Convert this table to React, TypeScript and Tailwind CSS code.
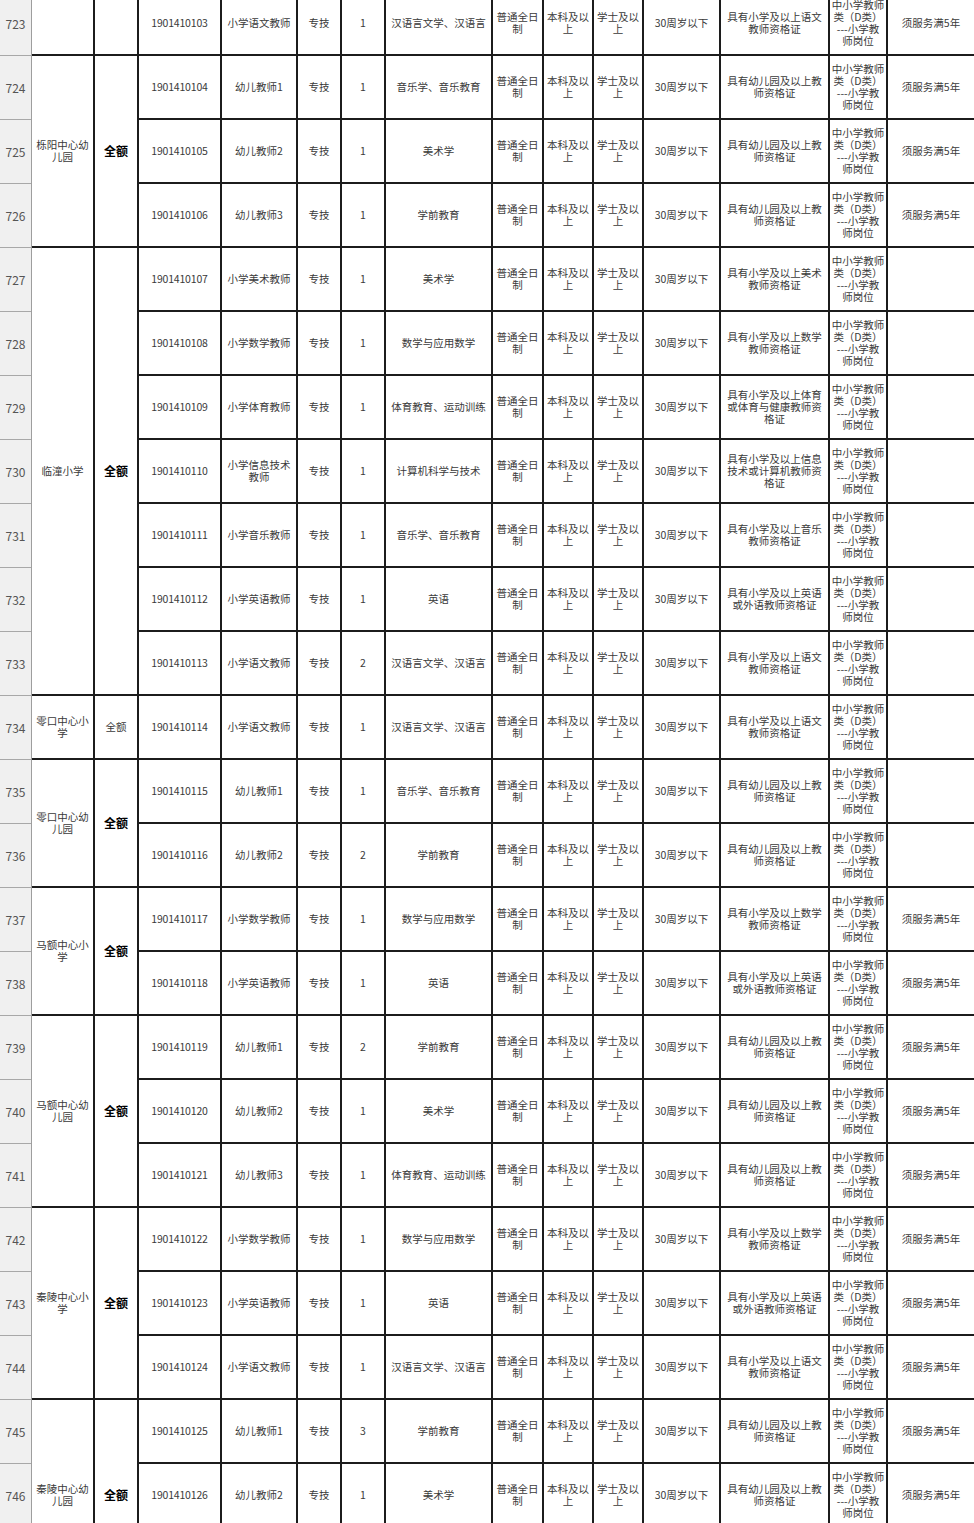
import React from "react";

type Row = {
  n: number;
  code: string;
  post: string;
  count: string;
  major: string;
  cert: string;
  note: string;
};

const rows: Row[] = [
  { n: 723, code: "1901410103", post: "小学语文教师", count: "1", major: "汉语言文学、汉语言", cert: "具有小学及以上语文教师资格证", note: "须服务满5年" },
  { n: 724, code: "1901410104", post: "幼儿教师1", count: "1", major: "音乐学、音乐教育", cert: "具有幼儿园及以上教师资格证", note: "须服务满5年" },
  { n: 725, code: "1901410105", post: "幼儿教师2", count: "1", major: "美术学", cert: "具有幼儿园及以上教师资格证", note: "须服务满5年" },
  { n: 726, code: "1901410106", post: "幼儿教师3", count: "1", major: "学前教育", cert: "具有幼儿园及以上教师资格证", note: "须服务满5年" },
  { n: 727, code: "1901410107", post: "小学美术教师", count: "1", major: "美术学", cert: "具有小学及以上美术教师资格证", note: "" },
  { n: 728, code: "1901410108", post: "小学数学教师", count: "1", major: "数学与应用数学", cert: "具有小学及以上数学教师资格证", note: "" },
  { n: 729, code: "1901410109", post: "小学体育教师", count: "1", major: "体育教育、运动训练", cert: "具有小学及以上体育或体育与健康教师资格证", note: "" },
  { n: 730, code: "1901410110", post: "小学信息技术教师", count: "1", major: "计算机科学与技术", cert: "具有小学及以上信息技术或计算机教师资格证", note: "" },
  { n: 731, code: "1901410111", post: "小学音乐教师", count: "1", major: "音乐学、音乐教育", cert: "具有小学及以上音乐教师资格证", note: "" },
  { n: 732, code: "1901410112", post: "小学英语教师", count: "1", major: "英语", cert: "具有小学及以上英语或外语教师资格证", note: "" },
  { n: 733, code: "1901410113", post: "小学语文教师", count: "2", major: "汉语言文学、汉语言", cert: "具有小学及以上语文教师资格证", note: "" },
  { n: 734, code: "1901410114", post: "小学语文教师", count: "1", major: "汉语言文学、汉语言", cert: "具有小学及以上语文教师资格证", note: "" },
  { n: 735, code: "1901410115", post: "幼儿教师1", count: "1", major: "音乐学、音乐教育", cert: "具有幼儿园及以上教师资格证", note: "" },
  { n: 736, code: "1901410116", post: "幼儿教师2", count: "2", major: "学前教育", cert: "具有幼儿园及以上教师资格证", note: "" },
  { n: 737, code: "1901410117", post: "小学数学教师", count: "1", major: "数学与应用数学", cert: "具有小学及以上数学教师资格证", note: "须服务满5年" },
  { n: 738, code: "1901410118", post: "小学英语教师", count: "1", major: "英语", cert: "具有小学及以上英语或外语教师资格证", note: "须服务满5年" },
  { n: 739, code: "1901410119", post: "幼儿教师1", count: "2", major: "学前教育", cert: "具有幼儿园及以上教师资格证", note: "须服务满5年" },
  { n: 740, code: "1901410120", post: "幼儿教师2", count: "1", major: "美术学", cert: "具有幼儿园及以上教师资格证", note: "须服务满5年" },
  { n: 741, code: "1901410121", post: "幼儿教师3", count: "1", major: "体育教育、运动训练", cert: "具有幼儿园及以上教师资格证", note: "须服务满5年" },
  { n: 742, code: "1901410122", post: "小学数学教师", count: "1", major: "数学与应用数学", cert: "具有小学及以上数学教师资格证", note: "须服务满5年" },
  { n: 743, code: "1901410123", post: "小学英语教师", count: "1", major: "英语", cert: "具有小学及以上英语或外语教师资格证", note: "须服务满5年" },
  { n: 744, code: "1901410124", post: "小学语文教师", count: "1", major: "汉语言文学、汉语言", cert: "具有小学及以上语文教师资格证", note: "须服务满5年" },
  { n: 745, code: "1901410125", post: "幼儿教师1", count: "3", major: "学前教育", cert: "具有幼儿园及以上教师资格证", note: "须服务满5年" },
  { n: 746, code: "1901410126", post: "幼儿教师2", count: "1", major: "美术学", cert: "具有幼儿园及以上教师资格证", note: "须服务满5年" },
  { n: 747, code: "1901410127", post: "幼儿教师3", count: "1", major: "体育教育、运动训练", cert: "具有幼儿园及以上教师资格证", note: "须服务满5年" },
];

type Group = { start: number; span: number; name: string; bold: boolean; fund: string };

const groups: Group[] = [
  { start: 0, span: 1, name: "", bold: false, fund: "" },
  { start: 1, span: 3, name: "栎阳中心幼儿园", bold: true, fund: "全额" },
  { start: 4, span: 7, name: "临潼小学", bold: true, fund: "全额" },
  { start: 11, span: 1, name: "零口中心小学", bold: false, fund: "全额" },
  { start: 12, span: 2, name: "零口中心幼儿园", bold: true, fund: "全额" },
  { start: 14, span: 2, name: "马额中心小学", bold: true, fund: "全额" },
  { start: 16, span: 3, name: "马额中心幼儿园", bold: true, fund: "全额" },
  { start: 19, span: 3, name: "秦陵中心小学", bold: true, fund: "全额" },
  { start: 22, span: 3, name: "秦陵中心幼儿园", bold: true, fund: "全额" },
];

const spanClass: Record<number, string> = {
  1: "row-span-1",
  2: "row-span-2",
  3: "row-span-3",
  7: "row-span-7",
};

const rowStartClass: string[] = [
  "row-start-1", "row-start-2", "row-start-3", "row-start-4", "row-start-5",
  "row-start-6", "row-start-7", "row-start-8", "row-start-9", "row-start-10",
  "row-start-11", "row-start-12", "row-start-13", "row-start-14", "row-start-15",
  "row-start-16", "row-start-17", "row-start-18", "row-start-19", "row-start-20",
  "row-start-21", "row-start-22", "row-start-23", "row-start-24", "row-start-25",
];

const cell = "bg-white flex items-center justify-center text-center text-[10.5px] leading-[12px] text-[#3a3a3a]";

export default function App() {
  return (
    <div
      className="h-[1523px] w-[974px] overflow-hidden bg-white"
      style={{ fontFamily: '"Noto Sans CJK SC", "Noto Sans", sans-serif' }}
    >
      <div className="flex -mt-[8px]">
        <div className="w-[32px] shrink-0 flex flex-col bg-[#f0f0f0] border-r border-[#9e9e9e]">
          {rows.map((r) => (
            <div
              key={r.n}
              className="h-[64px] shrink-0 border-b border-[#a8a8a8] flex items-center justify-center text-[12px] text-[#555] pt-[1px]"
            >
              {r.n}
            </div>
          ))}
        </div>
        <div className="grid grid-cols-[61px_42px_81px_74px_42px_42px_105px_49px_48px_48px_75px_107px_56px_86px] auto-rows-[62px] gap-[2px] bg-[#1c1c1c] pb-[2px]">
          {groups.map((g) => (
            <React.Fragment key={g.start}>
              <div
                className={`${cell} col-start-1 ${rowStartClass[g.start]} ${spanClass[g.span]} px-[3px]`}
              >
                {g.name}
              </div>
              <div
                className={`${cell} col-start-2 ${rowStartClass[g.start]} ${spanClass[g.span]} ${
                  g.bold ? "font-bold text-[12px] text-black" : ""
                }`}
              >
                {g.fund}
              </div>
            </React.Fragment>
          ))}
          {rows.map((r, i) => (
            <React.Fragment key={r.n}>
              <div className={`${cell} col-start-3 ${rowStartClass[i]} tracking-[-0.2px]`}>{r.code}</div>
              <div className={`${cell} col-start-4 ${rowStartClass[i]} px-[3px]`}>{r.post}</div>
              <div className={`${cell} col-start-5 ${rowStartClass[i]}`}>专技</div>
              <div className={`${cell} col-start-6 ${rowStartClass[i]}`}>{r.count}</div>
              <div className={`${cell} col-start-7 ${rowStartClass[i]}`}>{r.major}</div>
              <div className={`${cell} col-start-8 ${rowStartClass[i]} px-[3px]`}>普通全日制</div>
              <div className={`${cell} col-start-9 ${rowStartClass[i]} px-[3px]`}>本科及以上</div>
              <div className={`${cell} col-start-10 ${rowStartClass[i]} px-[3px]`}>学士及以上</div>
              <div className={`${cell} col-start-11 ${rowStartClass[i]}`}>30周岁以下</div>
              <div className={`${cell} col-start-12 ${rowStartClass[i]} px-[4px]`}>{r.cert}</div>
              <div className={`${cell} col-start-13 ${rowStartClass[i]} flex-col whitespace-nowrap`}>
                <span>中小学教师</span>
                <span>类（D类）</span>
                <span>---小学教</span>
                <span>师岗位</span>
              </div>
              <div className={`${cell} col-start-14 ${rowStartClass[i]}`}>{r.note}</div>
            </React.Fragment>
          ))}
        </div>
      </div>
    </div>
  );
}
